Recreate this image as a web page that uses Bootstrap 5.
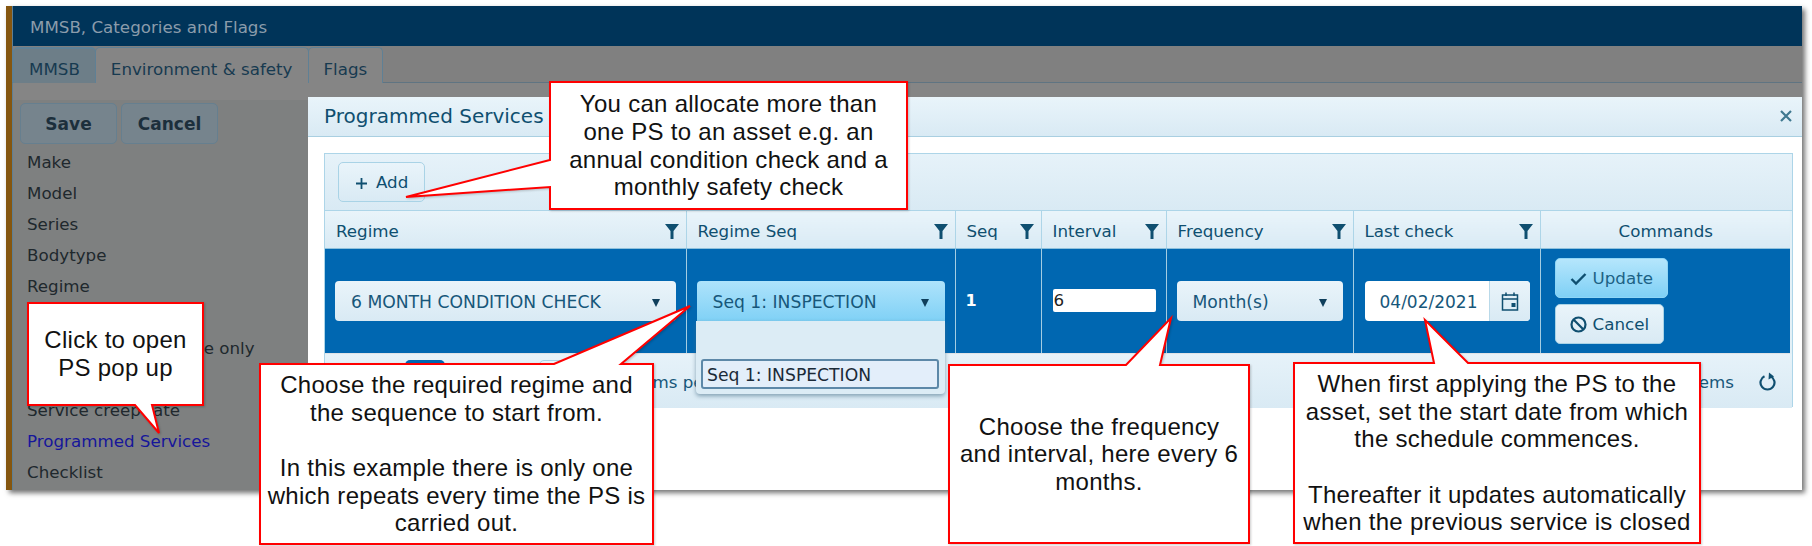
<!DOCTYPE html>
<html lang="en">
<head>
    <meta charset="UTF-8">
    <meta name="viewport" content="width=device-width, initial-scale=1.0">
    <title>Programmed Services</title>
    <link href="https://cdn.jsdelivr.net/npm/bootstrap@5.3.0/dist/css/bootstrap.min.css" rel="stylesheet">
    <style>
        body { background: #fff; font-family: "DejaVu Sans", sans-serif; font-size: 16.7px; color: #0f4f70; overflow: hidden; }
        .shot { position: relative; width: 1812px; height: 546px; overflow: hidden; padding: 6px 10px 56px 6px; }

        /* dimmed app window behind the dialog */
        .app-win { height: 484px; background: #808080; border-left: 6px solid #85560f; box-shadow: 3px 3px 5px rgba(0,0,0,.55); }
        .app-title { height: 40px; background: #003459; color: #8b9cab; font-size: 16.7px; padding: 9px 0 0 17px; border-left: 1px solid #5d7f95; }
        .app-tabs { height: 37px; padding-top: 1px; border-bottom: 1px solid #5f7482; border-left: 1px solid #5d7f95; margin: 0; }
        .app-tabs .tab-item { height: 36px; padding: 9px 15px 0; border: 1px solid #5f8095; border-bottom: 0; border-radius: 5px 5px 0 0; background: #858585; color: #173a50; font-size: 16.7px; line-height: 24px; }
        .app-tabs .tab-item + .tab-item { margin-left: -1px; }
        .app-tabs .tab-item.is-on { background: #6d7e88; border-top: 2px solid #5f8298; padding-top: 8px; }
        .app-side { padding: 20px 0 0 7px; border-left: 1px solid #5d7f95; height: 407px; background: linear-gradient(#858585 0 17px, #7e8080 17px); }
        .dim-btn { height: 41px; background: #76848d; border: 1px solid #667f8f; border-radius: 5px; color: #1c2f3c; font-weight: 700; font-size: 17px; padding: 2px 0 0; }
        .side-list { margin: 0; padding: 3px 0 0 7px; list-style: none; color: #20282d; font-size: 16.7px; line-height: 31px; }
        .side-list .is-link { color: #16169a; }

        /* dialog */
        .ps-dialog { position: absolute; left: 308px; top: 97px; width: 1494px; height: 393px; background: #fff; border-radius: 4px 0 0 0; }
        .ps-head { height: 40px; background: linear-gradient(#e9f4fa, #d9eaf4); border-bottom: 1px solid #a9cfe1; font-size: 20px; color: #0f4f70; padding: 4px 0 0 16px; }
        .ps-close { position: absolute; right: 10px; top: 13px; }
        .ps-body { padding: 16px 9px 0 16px; }
        .ps-grid { height: 254px; border: 1px solid #add5e8; background: #e3f0f7; }
        .ps-tools { height: 57px; background: linear-gradient(#e6f2f9, #d9eaf4); padding: 8px 0 0 13px; border-bottom: 1px solid #add5e8; }
        .soft-btn { display: inline-flex; align-items: center; gap: 6px; height: 40px; padding: 2px 14px 0; background: linear-gradient(#e9f4fa, #d9eaf4); border: 1px solid #a9d3e6; border-radius: 5px; color: #0f4f70; font-size: 16.7px; }
        .soft-btn.is-hot { background: linear-gradient(#b5e6fc, #7fd0f5); border-color: #8fd6f6; color: #1c6285; }
        .soft-btn.is-add { padding: 2px 16px 0; gap: 8px; }
        .cmd-stack { display: flex; flex-direction: column; align-items: flex-start; gap: 6px; }
        .ps-table { table-layout: fixed; width: 1465px; border-collapse: collapse; margin: 0; }
        .ps-table th { height: 37px; padding: 4px 10px 0 11px; font-weight: 400; font-size: 16.7px; color: #0f4f70; background: linear-gradient(#e9f4fa, #d9eaf4); border-right: 1px solid #add5e8; border-bottom: 1px solid #8fc1dc; vertical-align: middle; }
        .ps-table th:last-child { border-right: 0; }
        .ps-table td { height: 105px; padding: 0 10px; background: #0067b1; border-right: 1px solid #a4cde2; vertical-align: middle; }
        .ps-table td:last-child { border-right: 0; padding: 0 0 0 14px; }
        .ps-table .seq-cell { color: #fff; font-weight: 700; font-size: 16px; }
        .funnel { flex: none; margin-right: -3px; }
        .pick { display: flex; align-items: center; justify-content: space-between; height: 40px; padding: 4px 16px 0; background: linear-gradient(#e9f4fa, #d9eaf4); border-radius: 4px; font-size: 17.2px; color: #17577a; white-space: nowrap; }
        .pick.is-open { background: linear-gradient(#aee3fb, #80d1f6); border-radius: 4px 4px 0 0; box-shadow: 0 1px 0 #9cb9c7; }
        .caret-down { width: 0; height: 0; border-left: 4.5px solid transparent; border-right: 4.5px solid transparent; border-top: 8px solid #0f3f5c; }
        .num-box { display: block; width: 103px; height: 23px; margin-left: 1px; background: #fff; border-radius: 2px; color: #222; font-size: 16.7px; line-height: 23px; padding-left: 1px; }
        .date-box { display: flex; height: 40px; margin-left: 1px; background: #fff; border-radius: 4px; }
        .date-text { width: 125px; padding: 9px 0 0 15px; font-size: 17px; line-height: 24px; color: #17577a; border-right: 1px solid #b9d9e9; }
        .date-btn { flex: 1; display: flex; align-items: center; justify-content: center; background: linear-gradient(#e9f4fa, #d9eaf4); border-radius: 0 4px 4px 0; }
        .ps-pager { height: 54px; padding: 6px 15px 0 80px; font-size: 16.7px; color: #17577a; background: linear-gradient(#e6f2f9, #d9eaf4); }
        .pg-on { width: 40px; height: 40px; border-radius: 5px; background: #0067b1; color: #fff; text-align: center; line-height: 40px; }
        .pg-size { width: 72px; height: 40px; margin-left: 94px; background: #e9f4fa; border: 1px solid #a9d3e6; border-radius: 5px; }
        .pg-text { margin-left: 20px; margin-top: 10px; }
        .pg-info { margin-left: auto; margin-right: 25px; margin-top: 10px; }
        .pg-reload { margin-top: 12px; }
        .seq-menu { display: block; position: absolute; left: 388px; top: 224px; width: 249px; height: 73px; min-width: 0; padding: 0; margin: 0; background: #dcecf5; border: 0; border-radius: 0 0 4px 4px; box-shadow: 0 2px 4px rgba(70,110,135,.6); }
        .seq-opt { position: absolute; left: 5px; top: 38px; width: 238px; height: 30px; padding: 2px 0 0 4px; background: #e3eefa; border: 2px solid #5d88a8; border-radius: 3px; color: #1a2a38; font-size: 17.2px; line-height: 24px; white-space: nowrap; }

        /* callouts */
        .call-art { position: absolute; left: 0; top: 0; filter: drop-shadow(1px 1px 1px rgba(0,0,0,.2)); }
        .call-art polygon { fill: #fff; stroke: #f00; stroke-width: 2; }
        .call-text { position: absolute; display: flex; align-items: center; justify-content: center; text-align: center; font-family: "Liberation Sans", Arial, sans-serif; font-size: 24px; line-height: 27.6px; letter-spacing: .28px; color: #111; }
    </style>
</head>
<body>
    <div class="shot">
        <div class="app-win">
            <div class="app-title">MMSB, Categories and Flags</div>
            <div class="app-tabs d-flex">
                <div class="tab-item is-on">MMSB</div>
                <div class="tab-item">Environment &amp; safety</div>
                <div class="tab-item">Flags</div>
            </div>
            <div class="app-side">
                <div class="d-flex gap-1">
                    <button class="dim-btn" style="width: 97px">Save</button>
                    <button class="dim-btn" style="width: 97px">Cancel</button>
                </div>
                <ul class="side-list">
                    <li>Make</li>
                    <li>Model</li>
                    <li>Series</li>
                    <li>Bodytype</li>
                    <li>Regime</li>
                    <li>Service regime date</li>
                    <li>Service by this regime only</li>
                    <li>Service date</li>
                    <li>Service creep rate</li>
                    <li class="is-link">Programmed Services</li>
                    <li>Checklist</li>
                </ul>
            </div>
        </div>

        <div class="ps-dialog">
            <div class="ps-head">Programmed Services
                <svg class="ps-close" width="12" height="12" viewBox="0 0 12 12"><path d="M1 1L11 11M11 1L1 11" stroke="#3f7890" stroke-width="2.2"/></svg>
            </div>
            <div class="ps-body">
                <div class="ps-grid">
                    <div class="ps-tools">
                        <button class="soft-btn is-add">
                            <svg width="13" height="13" viewBox="0 0 13 13"><path d="M6.5 1V12M1 6.5H12" stroke="#0f4f70" stroke-width="1.8"/></svg>
                            Add
                        </button>
                    </div>
                    <table class="table ps-table">
                        <colgroup>
                            <col style="width: 361px"><col style="width: 269px"><col style="width: 86px"><col style="width: 125px"><col style="width: 187px"><col style="width: 187px"><col style="width: 250px">
                        </colgroup>
                        <thead>
                            <tr id="headRow"></tr>
                        </thead>
                        <tbody>
                            <tr>
                                <td><div class="pick"><span>6 MONTH CONDITION CHECK</span><i class="caret-down"></i></div></td>
                                <td><div class="pick is-open"><span>Seq 1: INSPECTION</span><i class="caret-down"></i></div></td>
                                <td class="seq-cell">1</td>
                                <td><span class="num-box">6</span></td>
                                <td><div class="pick"><span>Month(s)</span><i class="caret-down"></i></div></td>
                                <td>
                                    <div class="date-box">
                                        <div class="date-text">04/02/2021</div>
                                        <div class="date-btn">
                                            <svg width="18" height="20" viewBox="0 0 18 20"><path d="M1.5 4H16.5V19H1.5ZM1.5 8H16.5M5 1.5V5M13 1.5V5" fill="none" stroke="#0f4f70" stroke-width="1.5"/><rect x="10.5" y="12" width="4" height="4" fill="#0f4f70"/></svg>
                                        </div>
                                    </div>
                                </td>
                                <td>
                                    <div class="cmd-stack">
                                        <button class="soft-btn is-hot">
                                            <svg width="17" height="14" viewBox="0 0 17 14"><path d="M1.5 7L6 11.5L15.5 2" fill="none" stroke="#0f4f70" stroke-width="2.4"/></svg>
                                            Update
                                        </button>
                                        <button class="soft-btn">
                                            <svg width="17" height="17" viewBox="0 0 17 17"><circle cx="8.5" cy="8.5" r="7" fill="none" stroke="#0f4f70" stroke-width="2.2"/><path d="M3.5 3.5L13.5 13.5" stroke="#0f4f70" stroke-width="2.2"/></svg>
                                            Cancel
                                        </button>
                                    </div>
                                </td>
                            </tr>
                        </tbody>
                    </table>
                    <div class="ps-pager d-flex">
                        <div class="pg-on">1</div>
                        <div class="pg-size"></div>
                        <div class="pg-text">items per page</div>
                        <div class="pg-info">1 - 1 of 1 items</div>
                        <svg class="pg-reload" width="18" height="20" viewBox="0 0 18 20"><path d="M11.5 4.2A7 7 0 1 1 5.5 4.2" fill="none" stroke="#0f4f70" stroke-width="2.2"/><path d="M10 0.5L15 4.5L9.5 7.5Z" fill="#0f4f70"/></svg>
                    </div>
                </div>
            </div>
            <div class="dropdown-menu show seq-menu">
                <div class="seq-opt">Seq 1: INSPECTION</div>
            </div>
        </div>

        <svg class="call-art" width="1812" height="546">
            <polygon points="550,82 907,82 907,209 550,209 550,187 406,197 550,160"/>
            <polygon points="28,303 203,303 203,405 152,405 159,433 135,405 28,405"/>
            <polygon points="260,364 554,364 690,306 621,364 653,364 653,544 260,544"/>
            <polygon points="949,365 1126,365 1171,318 1160,365 1249,365 1249,543 949,543"/>
            <polygon points="1294,363 1434,363 1425,320 1468,363 1700,363 1700,543 1294,543"/>
        </svg>
        <div class="call-text" style="left: 550px; top: 82px; width: 357px; height: 127px">You can allocate more than<br>one PS to an asset e.g. an<br>annual condition check and a<br>monthly safety check</div>
        <div class="call-text" style="left: 28px; top: 303px; width: 175px; height: 102px">Click to open<br>PS pop up</div>
        <div class="call-text" style="left: 260px; top: 364px; width: 393px; height: 180px">Choose the required regime and<br>the sequence to start from.<br><br>In this example there is only one<br>which repeats every time the PS is<br>carried out.</div>
        <div class="call-text" style="left: 949px; top: 365px; width: 300px; height: 178px">Choose the frequency<br>and interval, here every 6<br>months.</div>
        <div class="call-text" style="left: 1294px; top: 363px; width: 406px; height: 180px">When first applying the PS to the<br>asset, set the start date from which<br>the schedule commences.<br><br>Thereafter it updates automatically<br>when the previous service is closed</div>
    </div>

    <script>
        // header cells, funnel on all but the last one
        const funnel = '<svg class="funnel" width="14" height="15" viewBox="0 0 14 15"><path d="M0 0H14L8.5 7V15H5.5V7Z" fill="#0f4f70"/></svg>';
        const heads = ['Regime', 'Regime Seq', 'Seq', 'Interval', 'Frequency', 'Last check'];
        document.getElementById('headRow').innerHTML =
            heads.map(h => `<th><div class="d-flex justify-content-between align-items-center"><span>${h}</span>${funnel}</div></th>`).join('') +
            '<th class="text-center">Commands</th>';
    </script>
    <script src="https://cdn.jsdelivr.net/npm/bootstrap@5.3.0/dist/js/bootstrap.bundle.min.js"></script>
</body>
</html>
